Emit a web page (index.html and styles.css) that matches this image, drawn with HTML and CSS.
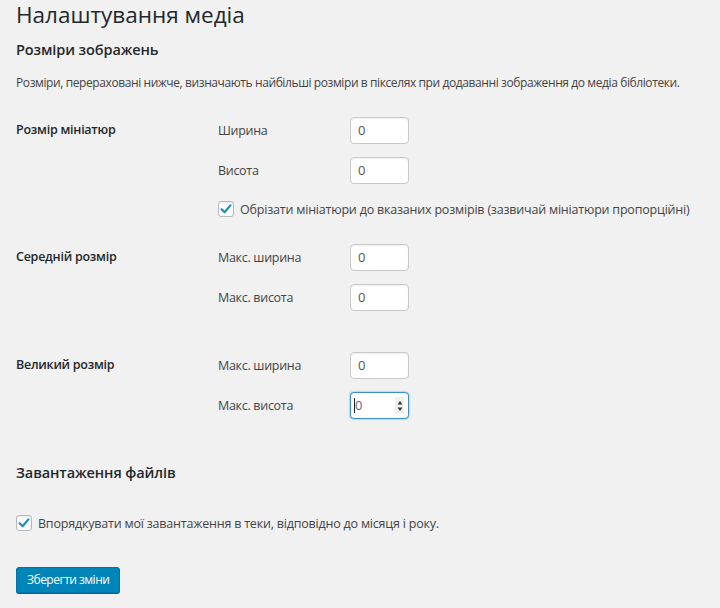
FILE: index.html
```html
<!DOCTYPE html>
<html lang="uk">
<head>
<meta charset="utf-8">
<title>Налаштування медіа</title>
<link rel="stylesheet" href="styles.css">
</head>
<body>
<div class="wrap">
  <h1 class="title">Налаштування медіа</h1>
  <h2 class="sec sec-first">Розміри зображень</h2>
  <p class="desc">Розміри, перераховані нижче, визначають найбільші розміри в пікселях при додаванні зображення до медіа бібліотеки.</p>

  <div class="row row-thumb">
    <div class="th">Розмір мініатюр</div>
    <div class="td">
      <div class="field"><span class="lbl">Ширина</span><span class="inp">0</span></div>
      <div class="field"><span class="lbl">Висота</span><span class="inp">0</span></div>
      <div class="check-line">
        <span class="cb"><svg viewBox="0 0 16 16" width="16" height="16"><path d="M3.6 8.2 L6.6 11.2 L12.4 4.4" fill="none" stroke="#1e8cbe" stroke-width="2.2" stroke-linecap="round" stroke-linejoin="round"/></svg></span>
        <span class="cb-text">Обрізати мініатюри до вказаних розмірів (зазвичай мініатюри пропорційні)</span>
      </div>
    </div>
  </div>

  <div class="row row-medium">
    <div class="th">Середній розмір</div>
    <div class="td">
      <div class="field"><span class="lbl">Макс. ширина</span><span class="inp">0</span></div>
      <div class="field"><span class="lbl">Макс. висота</span><span class="inp">0</span></div>
    </div>
  </div>

  <div class="row row-large">
    <div class="th">Великий розмір</div>
    <div class="td">
      <div class="field"><span class="lbl">Макс. ширина</span><span class="inp">0</span></div>
      <div class="field"><span class="lbl">Макс. висота</span><span class="inp focus"><span class="caret"></span>0<span class="spin"><svg viewBox="0 0 8 16" width="8" height="16"><path d="M4 3 L6.5 6.5 L1.5 6.5 Z" fill="#333"/><path d="M1.5 9.5 L6.5 9.5 L4 13 Z" fill="#333"/></svg></span></span></div>
    </div>
  </div>

  <h2 class="sec sec-upload">Завантаження файлів</h2>
  <div class="check-line upload-check">
    <span class="cb"><svg viewBox="0 0 16 16" width="16" height="16"><path d="M3.6 8.2 L6.6 11.2 L12.4 4.4" fill="none" stroke="#1e8cbe" stroke-width="2.2" stroke-linecap="round" stroke-linejoin="round"/></svg></span>
    <span class="cb-text">Впорядкувати мої завантаження в теки, відповідно до місяця і року.</span>
  </div>

  <div class="submit"><span class="btn">Зберегти зміни</span></div>
</div>
</body>
</html>
```
FILE: styles.css
```css
html, body {
  margin: 0;
  padding: 0;
  background: #f1f1f1;
}
body {
  font-family: "Open Sans", "Noto Sans", sans-serif;
  font-size: 13px;
  color: #23282d;
  width: 720px;
  height: 608px;
  overflow: hidden;
}
.wrap {
  padding-left: 16px;
}
.title {
  margin: 0;
  font-size: 22.5px;
  font-weight: 400;
  line-height: 30px;
  color: #23282d;
}
.sec {
  margin: 0;
  font-size: 14.5px;
  font-weight: 600;
  line-height: 20px;
  color: #23282d;
  letter-spacing: -0.1px;
}
.sec-first {
  margin-top: 10px;
}
.desc {
  margin: 13px 0 0;
  line-height: 20px;
  color: #444;
  font-size: 12px;
  letter-spacing: -0.4px;
  white-space: nowrap;
}
.row {
  display: flex;
}
.row-thumb { margin-top: 24px; }
.row-medium { margin-top: 26px; }
.row-large { margin-top: 41px; }
.th {
  width: 202px;
  flex: none;
  font-weight: 600;
  font-size: 12.5px;
  line-height: 20px;
  padding-top: 3px;
  letter-spacing: -0.25px;
}
.td {
  display: flex;
  flex-direction: column;
  gap: 13px;
}
.field {
  display: flex;
  align-items: center;
  height: 27px;
}
.lbl {
  width: 132px;
  color: #444;
  font-size: 12.5px;
  letter-spacing: -0.3px;
}
.inp {
  box-sizing: border-box;
  position: relative;
  width: 59px;
  height: 27px;
  background: #fff;
  border: 1px solid #c9c9c9;
  border-radius: 4px;
  box-shadow: inset 0 1px 2px rgba(0,0,0,.07);
  padding-left: 7px;
  line-height: 25px;
  font-size: 13px;
  color: #555;
  display: flex;
  align-items: center;
}
.inp.focus {
  border: 1px solid #3a8fc4;
  box-shadow: 0 0 2px rgba(30,140,190,.8);
  padding-left: 3px;
  color: #666;
}
.caret {
  display: inline-block;
  width: 1px;
  height: 15px;
  background: #222;
}
.spin {
  position: absolute;
  right: 4px;
  top: 4px;
  width: 9px;
  height: 17px;
  background: #f0f0f0;
  display: flex;
  align-items: center;
  justify-content: center;
}
.spin svg { display: block; }
.check-line {
  display: flex;
  align-items: center;
  height: 18px;
}
.td .check-line { margin-top: 3px; }
.cb {
  box-sizing: border-box;
  width: 16px;
  height: 16px;
  border: 1px solid #b4b9be;
  border-radius: 3px;
  background: #fff;
  box-shadow: inset 0 1px 2px rgba(0,0,0,.1);
  flex: none;
  display: flex;
  align-items: center;
  justify-content: center;
  margin-right: 6px;
}
.cb svg { display: block; margin: -1px; }
.cb-text {
  color: #444;
  font-size: 12.5px;
  letter-spacing: -0.2px;
}
.sec-upload {
  margin-top: 44px;
}
.upload-check {
  margin-top: 31px;
}
.submit {
  margin-top: 35px;
}
.btn {
  display: inline-block;
  box-sizing: border-box;
  height: 26px;
  line-height: 24px;
  padding: 0 10px;
  background: #0085ba;
  border: 1px solid #0073aa;
  border-radius: 3px;
  color: #fff;
  font-size: 12px;
  letter-spacing: -0.5px;
  box-shadow: 0 1px 0 #006799;
}
```
